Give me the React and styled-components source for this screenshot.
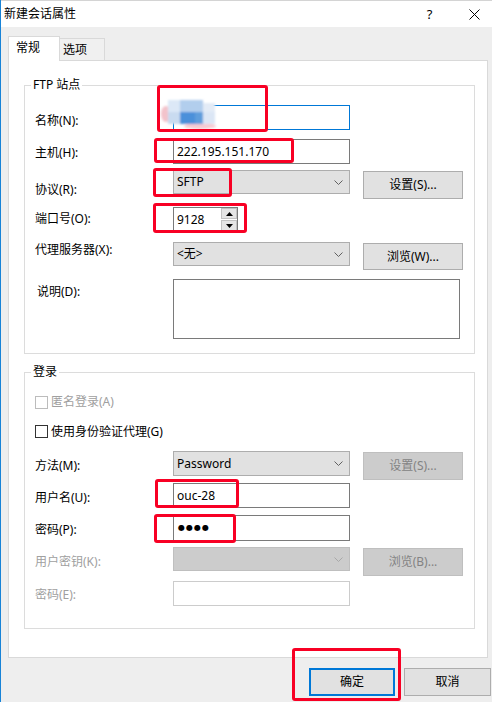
import React from "react";
import styled, { createGlobalStyle } from "styled-components";

const GlobalStyle = createGlobalStyle`
  html, body {
    margin: 0;
    padding: 0;
    background: #fff;
  }
  body {
    font-family: "Noto Sans", "Noto Sans CJK SC", sans-serif;
    font-size: 12px;
    color: #000;
  }
  * {
    box-sizing: border-box;
  }
`;

const Page = styled.div`
  position: relative;
  width: 492px;
  height: 707px;
`;

const Window = styled.div`
  width: 492px;
  height: 702px;
  border-left: 1px solid #1883d7;
  display: flex;
  flex-direction: column;
  overflow: hidden;
`;

const TitleBar = styled.div`
  height: 27px;
  flex: none;
  background: #fff;
  border-top: 1px solid #d4d4d4;
  display: flex;
  align-items: center;
  padding-left: 3px;
  line-height: 16px;
`;

const Title = styled.div`
  flex: 1;
`;

const TitleButton = styled.div`
  width: 45px;
  height: 26px;
  display: flex;
  align-items: center;
  justify-content: center;
  font-size: 13px;
`;

const Controls = styled.div`
  display: flex;
  margin-right: -5px;
`;

const Body = styled.div`
  flex: 1;
  background: #eeeeee;
  padding: 9px 4px 0 7px;
  display: flex;
  flex-direction: column;
`;

const TabStrip = styled.div`
  display: flex;
  align-items: flex-end;
  height: 25px;
  margin-bottom: -1px;
`;

const Tab = styled.div`
  width: ${(p) => p.$w}px;
  height: ${(p) => (p.$active ? 25 : 23)}px;
  margin-left: ${(p) => (p.$first ? 0 : -1)}px;
  border: 1px solid #d9d9d9;
  border-bottom: none;
  background: ${(p) => (p.$active ? "#fff" : "#f0f0f0")};
  padding: 3px 0 0 ${(p) => p.$pl}px;
  line-height: 16px;
  ${(p) => p.$active && "position: relative; z-index: 1;"}
`;

const Panel = styled.div`
  width: 480px;
  height: 598px;
  background: #fff;
  border: 1px solid #d9d9d9;
  padding: 16px 12px 0 15px;
  display: flex;
  flex-direction: column;
  gap: 10px;
`;

const Group = styled.fieldset`
  margin: 0;
  min-width: 0;
  width: 451px;
  border: 1px solid #dcdcdc;
  padding: ${(p) => p.$pt}px 0 ${(p) => p.$pb}px 10px;
`;

const Legend = styled.legend`
  padding: 0 2px;
  margin-left: -4px;
  line-height: 16px;
  font-size: 12px;
`;

const Row = styled.div`
  display: grid;
  grid-template-columns: 125px 177px 100px;
  column-gap: 13px;
  align-items: start;
  height: ${(p) => p.$h}px;
`;

const Label = styled.div`
  margin-top: ${(p) => p.$dy}px;
  padding-left: ${(p) => p.$indent || 0}px;
  line-height: 16px;
  white-space: nowrap;
  color: ${(p) => (p.$disabled ? "#a0a0a0" : "#000")};
`;

const TextBox = styled.div`
  width: ${(p) => p.$w || 177}px;
  height: ${(p) => p.$h}px;
  ${(p) => p.$span && "grid-column: 2 / span 2;"}
  background: #fff;
  border: 1px solid
    ${(p) => (p.$focus ? "#0078d7" : p.$disabled ? "#cccccc" : "#7a7a7a")};
  padding-left: 3px;
  display: flex;
  align-items: center;
  line-height: 16px;
  white-space: nowrap;
`;

const Dots = styled.span`
  font-family: "DejaVu Sans", sans-serif;
  font-size: 8px;
  letter-spacing: 1px;
  padding-left: 1px;
`;

const Select = styled.div`
  width: 177px;
  height: ${(p) => p.$h}px;
  background: ${(p) => (p.$disabled ? "#cccccc" : "#e1e1e1")};
  border: 1px solid ${(p) => (p.$disabled ? "#bfbfbf" : "#adadad")};
  padding: 0 6px 0 3px;
  display: flex;
  align-items: center;
  justify-content: space-between;
  line-height: 16px;
`;

const Button = styled.div`
  width: ${(p) => p.$w || 100}px;
  height: ${(p) => p.$h || 28}px;
  margin-top: ${(p) => p.$dy || 0}px;
  background: ${(p) => (p.$disabled ? "#cccccc" : "#e1e1e1")};
  border: ${(p) => (p.$primary ? 2 : 1)}px solid
    ${(p) => (p.$primary ? "#0078d7" : p.$disabled ? "#bfbfbf" : "#adadad")};
  color: ${(p) => (p.$disabled ? "#838383" : "#000")};
  display: flex;
  align-items: center;
  justify-content: center;
  line-height: 16px;
`;

const PortBox = styled.div`
  width: 65px;
  height: 25px;
  border: 1px solid #7a7a7a;
  background: #fff;
  display: flex;
  align-items: stretch;
  justify-content: space-between;
  padding-left: 3px;
`;

const PortValue = styled.span`
  align-self: center;
  line-height: 16px;
`;

const Spin = styled.div`
  width: 16px;
  display: flex;
  flex-direction: column;
  gap: 1px;
`;

const SpinButton = styled.div`
  flex: 1;
  background: #e5e5e5;
  border: 1px solid #c2c2c2;
  display: flex;
  align-items: center;
  justify-content: center;
`;

const CheckRow = styled.div`
  height: ${(p) => p.$h}px;
  display: flex;
  align-items: flex-start;
  gap: 3px;
  line-height: 16px;
  color: ${(p) => (p.$disabled ? "#a0a0a0" : "#000")};
`;

const CheckBox = styled.span`
  width: 13px;
  height: 13px;
  margin-top: ${(p) => p.$dy}px;
  border: 1px solid ${(p) => (p.$disabled ? "#bcbcbc" : "#333")};
  background: #fff;
  flex: none;
`;

const Footer = styled.div`
  display: flex;
  justify-content: flex-end;
  gap: 9px;
  margin-top: 10px;
  margin-right: -3px;
`;

const Mark = styled.div`
  position: absolute;
  left: ${(p) => p.$x}px;
  top: ${(p) => p.$y}px;
  width: ${(p) => p.$w}px;
  height: ${(p) => p.$h}px;
  border: 3px solid #f80024;
  border-radius: 3px;
  pointer-events: none;
`;

const Smudge = styled.svg`
  position: absolute;
  left: 160px;
  top: 97px;
`;

const Chevron = ({ disabled }) => (
  <svg width="9" height="5" viewBox="0 0 9 5">
    <polyline
      points="0.5,0.5 4.5,4.5 8.5,0.5"
      fill="none"
      stroke={disabled ? "#a8a8a8" : "#606060"}
      strokeWidth="1"
    />
  </svg>
);

const Arrow = ({ up }) => (
  <svg width="7" height="4" viewBox="0 0 7 4">
    <polygon points={up ? "0,4 7,4 3.5,0" : "0,0 7,0 3.5,4"} fill="#000" />
  </svg>
);

const CloseIcon = () => (
  <svg width="11" height="11" viewBox="0 0 11 11">
    <path d="M0.5 0.5 L10.5 10.5 M10.5 0.5 L0.5 10.5" stroke="#000" strokeWidth="1" />
  </svg>
);

export default function App() {
  return (
    <Page>
      <GlobalStyle />
      <Window>
        <TitleBar>
          <Title>新建会话属性</Title>
          <Controls>
            <TitleButton>?</TitleButton>
            <TitleButton>
              <CloseIcon />
            </TitleButton>
          </Controls>
        </TitleBar>
        <Body>
          <TabStrip>
            <Tab $active $first $w={52} $pl={7}>常规</Tab>
            <Tab $w={46} $pl={3}>选项</Tab>
          </TabStrip>
          <Panel>
            <Group $pt={12} $pb={14}>
              <Legend>FTP 站点</Legend>
              <Row $h={34}>
                <Label $dy={8}>名称(N):</Label>
                <TextBox $h={25} $focus />
              </Row>
              <Row $h={31}>
                <Label $dy={6}>主机(H):</Label>
                <TextBox $h={25}>222.195.151.170</TextBox>
              </Row>
              <Row $h={37}>
                <Label $dy={12}>协议(R):</Label>
                <Select $h={24}>
                  SFTP
                  <Chevron />
                </Select>
                <Button $dy={1}>设置(S)...</Button>
              </Row>
              <Row $h={35}>
                <Label $dy={4}>端口号(O):</Label>
                <PortBox>
                  <PortValue>9128</PortValue>
                  <Spin>
                    <SpinButton>
                      <Arrow up />
                    </SpinButton>
                    <SpinButton>
                      <Arrow />
                    </SpinButton>
                  </Spin>
                </PortBox>
              </Row>
              <Row $h={37}>
                <Label $dy={0}>代理服务器(X):</Label>
                <Select $h={24}>
                  {"<无>"}
                  <Chevron />
                </Select>
                <Button $dy={1} $h={27}>浏览(W)...</Button>
              </Row>
              <Row $h={60}>
                <Label $dy={5} $indent={2}>说明(D):</Label>
                <TextBox $span $w={287} $h={60} />
              </Row>
            </Group>

            <Group $pt={14} $pb={22}>
              <Legend>登录</Legend>
              <CheckRow $h={30} $disabled>
                <CheckBox $dy={2} $disabled />
                匿名登录(A)
              </CheckRow>
              <CheckRow $h={27}>
                <CheckBox $dy={1} />
                使用身份验证代理(G)
              </CheckRow>
              <Row $h={32}>
                <Label $dy={7}>方法(M):</Label>
                <Select $h={25}>
                  Password
                  <Chevron />
                </Select>
                <Button $dy={1} $disabled>设置(S)...</Button>
              </Row>
              <Row $h={32}>
                <Label $dy={7}>用户名(U):</Label>
                <TextBox $h={25}>ouc-28</TextBox>
              </Row>
              <Row $h={32}>
                <Label $dy={7}>密码(P):</Label>
                <TextBox $h={26}>
                  <Dots>●●●●</Dots>
                </TextBox>
              </Row>
              <Row $h={34}>
                <Label $dy={7} $disabled>用户密钥(K):</Label>
                <Select $h={24} $disabled>
                  <span />
                  <Chevron disabled />
                </Select>
                <Button $dy={1} $disabled>浏览(B)...</Button>
              </Row>
              <Row $h={25}>
                <Label $dy={6} $disabled>密码(E):</Label>
                <TextBox $h={25} $disabled />
              </Row>
            </Group>
          </Panel>
          <Footer>
            <Button $primary $w={86}>确定</Button>
            <Button $w={87}>取消</Button>
          </Footer>
        </Body>
      </Window>

      <Smudge width="64" height="34" viewBox="0 0 64 34">
        <defs>
          <filter id="soft" x="-10%" y="-10%" width="120%" height="120%">
            <feGaussianBlur stdDeviation="0.8" />
          </filter>
        </defs>
        <g filter="url(#soft)">
          <ellipse cx="6" cy="17" rx="5" ry="8" fill="#f3c3cb" />
          <ellipse cx="40" cy="29" rx="16" ry="3" fill="#f6cbd3" />
          <rect x="8" y="3" width="12" height="12" fill="#dce8f7" />
          <rect x="20" y="3" width="23" height="12" fill="#b2ceed" />
          <rect x="43" y="6" width="12" height="9" fill="#e3ebf6" />
          <rect x="8" y="15" width="12" height="12" fill="#c9dbf0" />
          <rect x="20" y="15" width="15" height="12" fill="#4b90da" />
          <rect x="35" y="15" width="8" height="12" fill="#5f9ddc" />
          <rect x="43" y="15" width="12" height="12" fill="#dbe6f5" />
        </g>
      </Smudge>

      <Mark $x={157} $y={85} $w={111} $h={47} />
      <Mark $x={154} $y={138} $w={140} $h={25} />
      <Mark $x={153} $y={168} $w={79} $h={29} />
      <Mark $x={153} $y={203} $w={94} $h={30} />
      <Mark $x={155} $y={479} $w={84} $h={29} />
      <Mark $x={154} $y={514} $w={82} $h={29} />
      <Mark $x={292} $y={648} $w={109} $h={53} />
    </Page>
  );
}
